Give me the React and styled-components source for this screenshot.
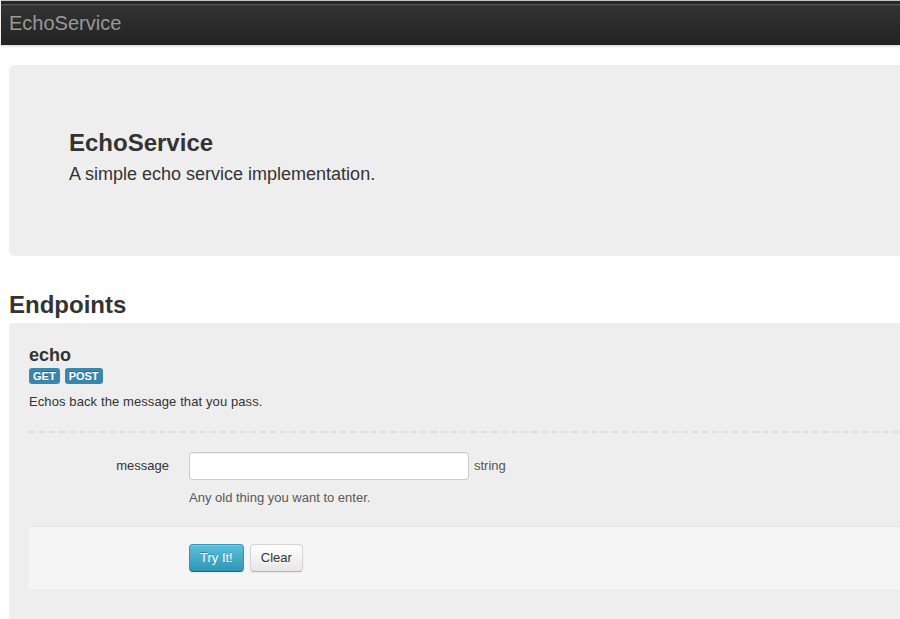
import styled, { createGlobalStyle } from "styled-components"

const GlobalStyle = createGlobalStyle`
    html, body {
        margin: 0;
        padding: 0;
        background: #fff;
        overflow-x: hidden;
    }
    body {
        font-family: "Liberation Sans", Arial, sans-serif;
        font-size: 13px;
        line-height: 18px;
        color: #333;
    }
    * {
        box-sizing: border-box;
    }
`

const NavBar = styled.div`
    margin: 0 -20px 0 1px;
    height: 45px;
    border-top: 1px solid #c4c4c4;
    background: linear-gradient(
        #262626 0,
        #262626 3px,
        #5c5c5c 3px,
        #4a4a4a 4px,
        #333 5px,
        #222 100%
    );
    box-shadow: 0 1px 3px rgba(0, 0, 0, 0.18);
    display: flex;
    align-items: center;
    .brand {
        padding: 0 0 0 8px;
        font-size: 20px;
        line-height: 24px;
        color: #999;
    }
`

const Container = styled.div`
    width: 940px;
    margin-left: 9px;
    padding-top: 20px;
`

const Hero = styled.div`
    background-color: #eee;
    border-radius: 6px;
    padding: 60px 60px 68px;
    h1 {
        margin: 0;
        font-size: 24px;
        font-weight: 700;
        line-height: 36px;
        color: #333;
    }
    p {
        margin: 0;
        font-size: 18px;
        line-height: 27px;
        color: #333;
    }
`

const SectionTitle = styled.h2`
    margin: 31px 0 0;
    font-size: 24px;
    font-weight: 700;
    line-height: 36px;
    color: #333;
`

const EndpointCard = styled.div`
    background-color: #eee;
    border-radius: 4px 4px 0 0;
    padding: 20px 20px 40px;
    h3 {
        margin: 0;
        font-size: 18px;
        font-weight: 700;
        line-height: 24px;
        color: #333;
    }
    .desc {
        margin: 9px 0 0;
        letter-spacing: 0.1px;
    }
`

const Methods = styled.div`
    display: flex;
    gap: 5px;
    margin-top: 1px;
`

const Badge = styled.span`
    display: inline-block;
    padding: 2px 4px;
    font-size: 11px;
    font-weight: 700;
    line-height: 12px;
    color: #fff;
    background-color: #3a87ad;
    border-radius: 3px;
    text-shadow: 0 -1px 0 rgba(0, 0, 0, 0.25);
`

const Fieldset = styled.div`
    margin-top: 20px;
    border-top: 2px dashed #ddd;
    padding-top: 19px;
`

const FormRow = styled.div`
    display: flex;
    align-items: center;
    .label {
        width: 140px;
        text-align: right;
        color: #333;
    }
    .controls {
        margin-left: 20px;
        display: flex;
        align-items: center;
        gap: 5px;
    }
    .type {
        color: #555;
    }
`

const TextInput = styled.input`
    width: 280px;
    height: 28px;
    padding: 4px 6px;
    font-family: inherit;
    font-size: 13px;
    color: #555;
    background: #fff;
    border: 1px solid #ccc;
    border-radius: 3px;
    box-shadow: inset 0 1px 1px rgba(0, 0, 0, 0.075);
    outline: none;
`

const HelpText = styled.div`
    margin: 9px 0 0 160px;
    color: #595959;
`

const FormActions = styled.div`
    margin-top: 19px;
    background-color: #f5f5f5;
    border-top: 1px solid #e5e5e5;
    padding: 17px 0 17px 160px;
    display: flex;
    gap: 6px;
`

const Button = styled.button`
    height: 28px;
    padding: 4px 10px;
    font-family: inherit;
    font-size: 13px;
    line-height: 18px;
    border-radius: 4px;
    cursor: pointer;
    border: 1px solid;
    color: ${(p) => (p.$primary ? "#fff" : "#333")};
    text-shadow: ${(p) =>
        p.$primary ? "0 -1px 0 rgba(0,0,0,0.25)" : "0 1px 1px rgba(255,255,255,0.75)"};
    background: ${(p) =>
        p.$primary
            ? "linear-gradient(#5bc0de, #2f96b4)"
            : "linear-gradient(#ffffff, #e6e6e6)"};
    border-color: ${(p) =>
        p.$primary
            ? "#2f96b4 #2f96b4 #1f6377"
            : "#d4d4d4 #d4d4d4 #b3b3b3"};
    box-shadow: inset 0 1px 0 rgba(255, 255, 255, 0.2), 0 1px 2px rgba(0, 0, 0, 0.05);
`

export default function App() {
    return (
        <>
            <GlobalStyle />
            <NavBar>
                <span className="brand">EchoService</span>
            </NavBar>
            <Container>
                <Hero>
                    <h1>EchoService</h1>
                    <p>A simple echo service implementation.</p>
                </Hero>

                <SectionTitle>Endpoints</SectionTitle>
                <EndpointCard>
                    <h3>echo</h3>
                    <Methods>
                        <Badge>GET</Badge>
                        <Badge>POST</Badge>
                    </Methods>
                    <p className="desc">Echos back the message that you pass.</p>

                    <Fieldset>
                        <FormRow>
                            <div className="label">message</div>
                            <div className="controls">
                                <TextInput type="text" />
                                <span className="type">string</span>
                            </div>
                        </FormRow>
                        <HelpText>Any old thing you want to enter.</HelpText>
                    </Fieldset>

                    <FormActions>
                        <Button $primary>Try It!</Button>
                        <Button>Clear</Button>
                    </FormActions>
                </EndpointCard>
            </Container>
        </>
    )
}
